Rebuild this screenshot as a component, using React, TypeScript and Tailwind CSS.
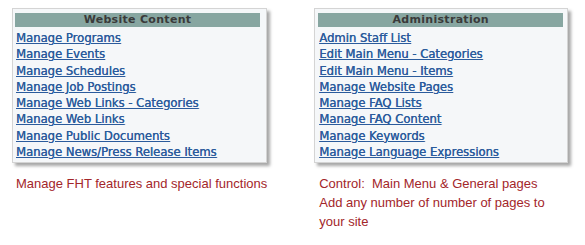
const websiteLinks = [
  "Manage Programs",
  "Manage Events",
  "Manage Schedules",
  "Manage Job Postings",
  "Manage Web Links - Categories",
  "Manage Web Links",
  "Manage Public Documents",
  "Manage News/Press Release Items",
];

const adminLinks = [
  "Admin Staff List",
  "Edit Main Menu - Categories",
  "Edit Main Menu - Items",
  "Manage Website Pages",
  "Manage FAQ Lists",
  "Manage FAQ Content",
  "Manage Keywords",
  "Manage Language Expressions",
];

function Panel({ title, links, width, pl }: { title: string; links: string[]; width: string; pl: string }) {
  return (
    <div
      className={`${width} ${pl} h-[155px] border border-[#d4d4d4] bg-[#f5f7f9] pt-[4px] shadow-[3px_3px_3px_rgba(0,0,0,0.35)]`}
    >
      <div className="h-[14px] w-[245px] bg-[#87a6a1] text-center text-[11px] font-bold leading-[14px] tracking-[0.3px] text-[#3a3a3a]">
        {title}
      </div>
      <ul className="mt-[3px] pl-[1px]">
        {links.map((l) => (
          <li key={l} className="h-[16.3px] text-[11.6px] leading-[16px]">
            <a href="#" className="text-[#2b5b9c] underline [text-shadow:0.3px_0_0_#2b5b9c]">
              {l}
            </a>
          </li>
        ))}
      </ul>
    </div>
  );
}

export default function App() {
  return (
    <div className="h-[245px] w-[585px] bg-white pl-[12px] pt-[8px] font-['DejaVu_Sans',sans-serif]">
      <div className="flex gap-[47px]">
        <div>
          <Panel title="Website Content" links={websiteLinks} width="w-[255px]" pl="pl-[2px]" />
          <p className="mt-[11px] pl-[4px] font-['Liberation_Sans',sans-serif] text-[13px] leading-[19px] text-[#a3262a]">
            Manage FHT features and special functions
          </p>
        </div>
        <div>
          <Panel title="Administration" links={adminLinks} width="w-[254px]" pl="pl-[3px]" />
          <p className="mt-[11px] w-[240px] whitespace-pre-wrap pl-[5px] font-['Liberation_Sans',sans-serif] text-[13px] leading-[19px] text-[#a3262a]">
            {"Control:  Main Menu & General pages\nAdd any number of number of pages to your site"}
          </p>
        </div>
      </div>
    </div>
  );
}
